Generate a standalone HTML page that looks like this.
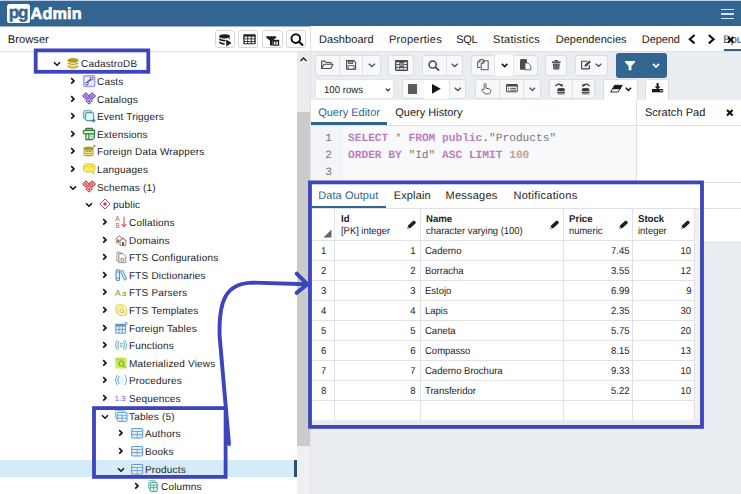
<!DOCTYPE html><html><head><meta charset="utf-8"><style>
html,body{margin:0;padding:0;}
body{width:741px;height:494px;overflow:hidden;position:relative;background:#fff;font-family:"Liberation Sans",sans-serif;}
.t{position:absolute;white-space:nowrap;line-height:1;text-rendering:geometricPrecision;}
.r{position:absolute;box-sizing:border-box;}
svg{position:absolute;overflow:visible;}
</style></head><body>
<div class="r" style="left:0.00px;top:0.00px;width:741.00px;height:1.20px;background:#b9d0e8"></div><div class="r" style="left:0.00px;top:1.00px;width:741.00px;height:24.50px;background:#326690"></div><div class="r" style="left:0.00px;top:25.50px;width:741.00px;height:0.80px;background:#9fb4c8"></div><div class="r" style="left:6.80px;top:4.00px;width:23.50px;height:19.20px;background:#fff;border-radius:2.5px"></div><div class="t" style="left:8.80px;top:4.20px;font-size:17px;color:#326690;font-weight:bold;font-family:'Liberation Sans', sans-serif;letter-spacing:-1.2px;-webkit-text-stroke:0.5px #326690">pg</div><div class="t" style="left:30.60px;top:6.20px;font-size:16.3px;color:#fff;font-weight:bold;font-family:'Liberation Sans', sans-serif;-webkit-text-stroke:0.6px #fff;letter-spacing:0.1px">Admin</div><div class="r" style="left:721.20px;top:8.85px;width:13.30px;height:1.30px;background:#d3e2f2"></div><div class="r" style="left:721.20px;top:13.35px;width:13.30px;height:1.30px;background:#d3e2f2"></div><div class="r" style="left:721.20px;top:17.65px;width:13.30px;height:1.30px;background:#d3e2f2"></div><div class="t" style="left:7.80px;top:35.20px;font-size:11.2px;color:#222;font-weight:normal;font-family:'Liberation Sans', sans-serif;">Browser</div><div class="r" style="left:214.70px;top:29.70px;width:20.20px;height:18.70px;border:1px solid #d3d6db;border-radius:3px;background:#fff"></div><div class="r" style="left:238.30px;top:29.70px;width:20.20px;height:18.70px;border:1px solid #d3d6db;border-radius:3px;background:#fff"></div><div class="r" style="left:262.40px;top:29.70px;width:20.20px;height:18.70px;border:1px solid #d3d6db;border-radius:3px;background:#fff"></div><div class="r" style="left:286.20px;top:29.70px;width:20.20px;height:18.70px;border:1px solid #d3d6db;border-radius:3px;background:#fff"></div><div class="r" style="left:0.00px;top:51.20px;width:310.00px;height:0.90px;background:#dde0e4"></div><div class="r" style="left:297.00px;top:52.00px;width:13.00px;height:60.00px;background:#ececec"></div><div class="r" style="left:297.00px;top:112.00px;width:13.00px;height:333.50px;background:#cbcbcb"></div><div class="r" style="left:297.00px;top:445.50px;width:13.00px;height:48.50px;background:#efefef"></div><svg style="left:299px;top:55px" width="9" height="8"><path d="M1.5 6 L4.5 3 L7.5 6" stroke="#222" stroke-width="1.4" fill="none"/></svg><div class="r" style="left:0.00px;top:459.80px;width:294.30px;height:17.20px;background:#d6ebf8"></div><div class="r" style="left:294.30px;top:459.80px;width:2.70px;height:17.20px;background:#2c4f72"></div><svg style="left:53.00px;top:60.50px" width="8" height="6"><path d="M1 1.2 L4 4.2 L7 1.2" stroke="#111" stroke-width="1.5" fill="none"/></svg><svg style="left:66.70px;top:56.70px" width="12.5" height="12" viewBox="0 0 12.5 12"><path d="M0.6 3.5 L0.6 9.6 Q0.6 11.6 6 11.6 Q11.4 11.6 11.4 9.6 L11.4 3.5 Z" fill="#f3eba9"/><path d="M0.6 6.4 Q6 8.6 11.4 6.4 M0.6 9.3 Q6 11.5 11.4 9.3" stroke="#a48e2a" stroke-width="0.9" fill="none"/><path d="M0.6 9.6 Q0.6 11.6 6 11.6 Q11.4 11.6 11.4 9.6" stroke="#cdb857" stroke-width="0.6" fill="none"/><ellipse cx="6" cy="3.4" rx="5.5" ry="2.4" fill="#b19a2f"/></svg><div class="t" style="left:81.00px;top:60.20px;font-size:10.0px;color:#222;font-weight:normal;font-family:'Liberation Sans', sans-serif;letter-spacing:0.18px">CadastroDB</div><svg style="left:70.00px;top:76.90px" width="6" height="8"><path d="M1.2 1.2 L4 3.9 L1.2 6.6" stroke="#111" stroke-width="1.6" fill="none"/></svg><svg style="left:82.70px;top:74.70px" width="12.5" height="12" viewBox="0 0 12.5 12"><rect x="0.8" y="0.8" width="10.9" height="10.6" rx="1.2" fill="#ecebfa" stroke="#a49fe0" stroke-width="1.5"/><path d="M3.6 9.2 C4.5 6.8 4.2 6.6 6 5.8 C7.6 5 7.8 4.6 8.8 3.2" stroke="#4b40ae" stroke-width="1.4" fill="none"/><circle cx="4" cy="8.6" r="1.35" fill="#fff" stroke="#4b40ae" stroke-width="0.9"/><circle cx="8.7" cy="3.6" r="1.35" fill="#fff" stroke="#4b40ae" stroke-width="0.9"/></svg><div class="t" style="left:97.00px;top:78.20px;font-size:10.0px;color:#222;font-weight:normal;font-family:'Liberation Sans', sans-serif;letter-spacing:0.18px">Casts</div><svg style="left:70.00px;top:94.90px" width="6" height="8"><path d="M1.2 1.2 L4 3.9 L1.2 6.6" stroke="#111" stroke-width="1.6" fill="none"/></svg><svg style="left:82.70px;top:92.70px" width="12.5" height="12" viewBox="0 0 12.5 12"><g fill="#ece2fa" stroke="#7b52c1" stroke-width="1.15" stroke-linejoin="round"><path d="M3 0 L6.1 3 L3 6 L-0.1 3Z"/><path d="M9.2 0 L12.3 3 L9.2 6 L6.1 3Z"/><path d="M6.1 4.9 L9.2 7.9 L6.1 10.9 L3 7.9Z"/></g><g fill="#5e36a8"><circle cx="3" cy="3" r="1"/><circle cx="9.2" cy="3" r="1"/><circle cx="6.1" cy="7.9" r="1"/></g></svg><div class="t" style="left:97.00px;top:96.20px;font-size:10.0px;color:#222;font-weight:normal;font-family:'Liberation Sans', sans-serif;letter-spacing:0.18px">Catalogs</div><svg style="left:70.00px;top:111.90px" width="6" height="8"><path d="M1.2 1.2 L4 3.9 L1.2 6.6" stroke="#111" stroke-width="1.6" fill="none"/></svg><svg style="left:82.70px;top:109.70px" width="12.5" height="12" viewBox="0 0 12.5 12"><rect x="0.7" y="0.7" width="8" height="8" rx="1.5" fill="#e6f6f7" stroke="#4aa3a8" stroke-width="1.1"/><rect x="2.6" y="2.6" width="8" height="8" rx="1.5" fill="#e3f6f8" stroke="#4aa3a8" stroke-width="1.1"/><path d="M7.5 10.6 L11.5 10.6 M10 9 L11.8 10.6 L10 12.2" stroke="#2f8a93" stroke-width="1.2" fill="none"/></svg><div class="t" style="left:97.00px;top:113.20px;font-size:10.0px;color:#222;font-weight:normal;font-family:'Liberation Sans', sans-serif;letter-spacing:0.18px">Event Triggers</div><svg style="left:70.00px;top:129.90px" width="6" height="8"><path d="M1.2 1.2 L4 3.9 L1.2 6.6" stroke="#111" stroke-width="1.6" fill="none"/></svg><svg style="left:82.70px;top:127.70px" width="12.5" height="12" viewBox="0 0 12.5 12"><g stroke="#2f7d3b" stroke-width="1.1" fill="#c8efc8" stroke-linejoin="round"><path d="M3 0.4 L9.4 0.4 L10.2 2.4 L2.4 2.4 Z"/><path d="M1.6 2.4 L11.6 2.4 L11.6 6 L1.6 6 Q0.2 6 0.2 4.2 Q0.2 2.4 1.6 2.4 Z"/><path d="M2.8 6 L11.4 6 L11.4 9.6 L9.2 11.6 L2.8 11.6 Z"/></g><path d="M5.8 6 L5.8 11.6 M8.8 8.4 L9.6 8.4" stroke="#2f7d3b" stroke-width="1"/><path d="M3.5 4.2 L8 4.2" stroke="#eaffea" stroke-width="0.8"/></svg><div class="t" style="left:97.00px;top:131.20px;font-size:10.0px;color:#222;font-weight:normal;font-family:'Liberation Sans', sans-serif;letter-spacing:0.18px">Extensions</div><svg style="left:70.00px;top:146.90px" width="6" height="8"><path d="M1.2 1.2 L4 3.9 L1.2 6.6" stroke="#111" stroke-width="1.6" fill="none"/></svg><svg style="left:82.70px;top:144.70px" width="12.5" height="12" viewBox="0 0 12.5 12"><path d="M0.4 3.6 L0.4 10.2 Q0.4 11.8 5.6 11.8 Q10.8 11.8 10.8 10.2 L10.8 3.6 Z" fill="#f3eba9"/><path d="M0.4 5.8 Q5.6 7.6 10.8 5.8 M0.4 7.9 Q5.6 9.7 10.8 7.9 M0.4 10 Q5.6 11.8 10.8 10" stroke="#a48e2a" stroke-width="0.9" fill="none"/><ellipse cx="5.6" cy="3.6" rx="5.2" ry="2" fill="#b19a2f"/><path d="M9.6 0 L12.4 0 L12.4 2.6 Z" fill="#a8922c"/><path d="M9.2 3 L11.4 1" stroke="#a8922c" stroke-width="0.8"/></svg><div class="t" style="left:97.00px;top:148.20px;font-size:10.0px;color:#222;font-weight:normal;font-family:'Liberation Sans', sans-serif;letter-spacing:0.18px">Foreign Data Wrappers</div><svg style="left:70.00px;top:164.90px" width="6" height="8"><path d="M1.2 1.2 L4 3.9 L1.2 6.6" stroke="#111" stroke-width="1.6" fill="none"/></svg><svg style="left:82.70px;top:162.70px" width="12.5" height="12" viewBox="0 0 12.5 12"><path d="M2.4 1 L10.2 1 L12 2.8 L12 6.8 L10.4 8.6 L10.6 11 L8.2 9 L2.4 9 L0.5 7 L0.5 2.8 Z" fill="#f6ef5a" stroke="#cfbf3a" stroke-width="0.9" stroke-linejoin="round"/><path d="M1.8 3.6 L10.8 3.6" stroke="#d9ca40" stroke-width="0.9"/></svg><div class="t" style="left:97.00px;top:166.20px;font-size:10.0px;color:#222;font-weight:normal;font-family:'Liberation Sans', sans-serif;letter-spacing:0.18px">Languages</div><svg style="left:69.00px;top:184.50px" width="8" height="6"><path d="M1 1.2 L4 4.2 L7 1.2" stroke="#111" stroke-width="1.5" fill="none"/></svg><svg style="left:82.70px;top:180.70px" width="12.5" height="12" viewBox="0 0 12.5 12"><g fill="#fbe6e7" stroke="#cf4f57" stroke-width="1.15" stroke-linejoin="round"><path d="M3 0 L6.1 3 L3 6 L-0.1 3Z"/><path d="M9.2 0 L12.3 3 L9.2 6 L6.1 3Z"/><path d="M6.1 4.9 L9.2 7.9 L6.1 10.9 L3 7.9Z"/></g><g fill="#b8363e"><circle cx="3" cy="3" r="1"/><circle cx="9.2" cy="3" r="1"/><circle cx="6.1" cy="7.9" r="1"/></g></svg><div class="t" style="left:97.00px;top:184.20px;font-size:10.0px;color:#222;font-weight:normal;font-family:'Liberation Sans', sans-serif;letter-spacing:0.18px">Schemas (1)</div><svg style="left:85.00px;top:201.50px" width="8" height="6"><path d="M1 1.2 L4 4.2 L7 1.2" stroke="#111" stroke-width="1.5" fill="none"/></svg><svg style="left:98.70px;top:197.70px" width="12.5" height="12" viewBox="0 0 12.5 12"><path d="M6 0.9 L11.1 6 L6 11.1 L0.9 6 Z" fill="#fff" stroke="#b0474d" stroke-width="1"/><path d="M6 3.9 L8.1 6 L6 8.1 L3.9 6Z" fill="#c23c47"/></svg><div class="t" style="left:113.00px;top:201.20px;font-size:10.0px;color:#222;font-weight:normal;font-family:'Liberation Sans', sans-serif;letter-spacing:0.18px">public</div><svg style="left:102.00px;top:217.90px" width="6" height="8"><path d="M1.2 1.2 L4 3.9 L1.2 6.6" stroke="#111" stroke-width="1.6" fill="none"/></svg><svg style="left:114.70px;top:215.70px" width="12.5" height="12" viewBox="0 0 12.5 12"><text x="0.2" y="5.4" font-size="6.6" font-family="Liberation Sans" fill="#d9545a">A</text><text x="0.4" y="11.6" font-size="6.6" font-family="Liberation Sans" fill="#d9545a">B</text><path d="M9 0.8 L9 10.5 M6.8 8.2 L9 10.6 L11.2 8.2" stroke="#d9545a" stroke-width="1.1" fill="none"/></svg><div class="t" style="left:129.00px;top:219.20px;font-size:10.0px;color:#222;font-weight:normal;font-family:'Liberation Sans', sans-serif;letter-spacing:0.18px">Collations</div><svg style="left:102.00px;top:235.90px" width="6" height="8"><path d="M1.2 1.2 L4 3.9 L1.2 6.6" stroke="#111" stroke-width="1.6" fill="none"/></svg><svg style="left:114.70px;top:233.70px" width="12.5" height="12" viewBox="0 0 12.5 12"><path d="M0.6 5.2 L4.2 1.6 L7.6 5" stroke="#b46a5e" stroke-width="1" fill="none"/><path d="M1.4 4.6 L1.4 9 L4 9" stroke="#8a8a8a" stroke-width="0.9" fill="none"/><rect x="2.4" y="5.6" width="1.6" height="2.6" fill="#7a5230"/><path d="M4.2 7.6 L7.8 4 L11.6 7.6" stroke="#b46a5e" stroke-width="1.1" fill="none"/><path d="M5 7.2 L5 11.4 L10.8 11.4 L10.8 7.2" stroke="#8a8a8a" stroke-width="1" fill="#fff"/><rect x="6.9" y="8.2" width="2.2" height="3.2" fill="#7a5230"/></svg><div class="t" style="left:129.00px;top:237.20px;font-size:10.0px;color:#222;font-weight:normal;font-family:'Liberation Sans', sans-serif;letter-spacing:0.18px">Domains</div><svg style="left:102.00px;top:252.90px" width="6" height="8"><path d="M1.2 1.2 L4 3.9 L1.2 6.6" stroke="#111" stroke-width="1.6" fill="none"/></svg><svg style="left:114.70px;top:250.70px" width="12.5" height="12" viewBox="0 0 12.5 12"><path d="M1.8 1 L5.5 1 L7.5 3 L7.5 10 L1.8 10 Z" fill="#f4f4f4" stroke="#9a9a9a" stroke-width="0.9"/><path d="M3.8 2.6 L8 2.6 L10.8 5.4 L10.8 11.6 L3.8 11.6 Z" fill="#fafafa" stroke="#8a8a8a" stroke-width="1"/><circle cx="7.3" cy="8.6" r="1.5" fill="none" stroke="#7a7a7a" stroke-width="1"/></svg><div class="t" style="left:129.00px;top:254.20px;font-size:10.0px;color:#222;font-weight:normal;font-family:'Liberation Sans', sans-serif;letter-spacing:0.18px">FTS Configurations</div><svg style="left:102.00px;top:270.90px" width="6" height="8"><path d="M1.2 1.2 L4 3.9 L1.2 6.6" stroke="#111" stroke-width="1.6" fill="none"/></svg><svg style="left:114.70px;top:268.70px" width="12.5" height="12" viewBox="0 0 12.5 12"><rect x="1" y="0.8" width="3.6" height="10.6" rx="0.6" fill="#e3eef8" stroke="#4d84b8" stroke-width="1"/><path d="M1 3 L4.6 3 M1 9.2 L4.6 9.2" stroke="#4d84b8" stroke-width="0.8"/><path d="M5.4 2.2 L7.6 1.2 L11.6 10.2 L9.4 11.2 Z" fill="#d8ecf8" stroke="#4d9ac8" stroke-width="1" stroke-linejoin="round"/></svg><div class="t" style="left:129.00px;top:272.20px;font-size:10.0px;color:#222;font-weight:normal;font-family:'Liberation Sans', sans-serif;letter-spacing:0.18px">FTS Dictionaries</div><svg style="left:102.00px;top:287.90px" width="6" height="8"><path d="M1.2 1.2 L4 3.9 L1.2 6.6" stroke="#111" stroke-width="1.6" fill="none"/></svg><svg style="left:114.70px;top:285.70px" width="12.5" height="12" viewBox="0 0 12.5 12"><text x="0" y="9.6" font-size="8.6" font-family="Liberation Sans" fill="#5f9e2a" style="text-rendering:geometricPrecision">A</text><text x="7" y="9.6" font-size="8" font-family="Liberation Sans" fill="#5f9e2a" style="text-rendering:geometricPrecision">a</text></svg><div class="t" style="left:129.00px;top:289.20px;font-size:10.0px;color:#222;font-weight:normal;font-family:'Liberation Sans', sans-serif;letter-spacing:0.18px">FTS Parsers</div><svg style="left:102.00px;top:305.90px" width="6" height="8"><path d="M1.2 1.2 L4 3.9 L1.2 6.6" stroke="#111" stroke-width="1.6" fill="none"/></svg><svg style="left:114.70px;top:303.70px" width="12.5" height="12" viewBox="0 0 12.5 12"><rect x="0.7" y="0.7" width="8.5" height="8.5" rx="2" fill="#faf6c0" stroke="#e3d657" stroke-width="1"/><rect x="2.8" y="2.8" width="8.7" height="8.7" rx="2" fill="#fbf7c4" stroke="#e3d657" stroke-width="1"/><circle cx="6.8" cy="6.8" r="1.8" fill="none" stroke="#c8b84a" stroke-width="0.9"/><path d="M8.1 8.1 L9.5 9.5" stroke="#c8b84a" stroke-width="0.9"/></svg><div class="t" style="left:129.00px;top:307.20px;font-size:10.0px;color:#222;font-weight:normal;font-family:'Liberation Sans', sans-serif;letter-spacing:0.18px">FTS Templates</div><svg style="left:102.00px;top:323.90px" width="6" height="8"><path d="M1.2 1.2 L4 3.9 L1.2 6.6" stroke="#111" stroke-width="1.6" fill="none"/></svg><svg style="left:114.70px;top:321.70px" width="12.5" height="12" viewBox="0 0 12.5 12"><rect x="0.8" y="2.2" width="9.6" height="9" fill="#e8f2fb" stroke="#5b93c9" stroke-width="0.9"/><rect x="0.8" y="2.2" width="9.6" height="2.4" fill="#5b93c9"/><path d="M0.8 7.4 L10.4 7.4 M4 4.6 L4 11.2 M7.2 4.6 L7.2 11.2" stroke="#5b93c9" stroke-width="0.8"/><path d="M9.4 0.6 L12 0.6 L12 3.2" stroke="#5b93c9" stroke-width="0.9" fill="none"/></svg><div class="t" style="left:129.00px;top:325.20px;font-size:10.0px;color:#222;font-weight:normal;font-family:'Liberation Sans', sans-serif;letter-spacing:0.18px">Foreign Tables</div><svg style="left:102.00px;top:340.90px" width="6" height="8"><path d="M1.2 1.2 L4 3.9 L1.2 6.6" stroke="#111" stroke-width="1.6" fill="none"/></svg><svg style="left:114.70px;top:338.70px" width="12.5" height="12" viewBox="0 0 12.5 12"><path d="M2.6 0.8 C0.2 3.2 0.2 8.8 2.6 11.2 M4 2.2 C2.6 4 2.6 8 4 9.8 M9.6 0.8 C12 3.2 12 8.8 9.6 11.2 M8.2 2.2 C9.6 4 9.6 8 8.2 9.8" stroke="#4f9eaa" stroke-width="0.9" fill="none"/><path d="M4.8 4.4 L7.4 4.4 M4.8 6 L7.4 6 M4.8 7.6 L7.4 7.6" stroke="#4f9eaa" stroke-width="0.8"/></svg><div class="t" style="left:129.00px;top:342.20px;font-size:10.0px;color:#222;font-weight:normal;font-family:'Liberation Sans', sans-serif;letter-spacing:0.18px">Functions</div><svg style="left:102.00px;top:358.90px" width="6" height="8"><path d="M1.2 1.2 L4 3.9 L1.2 6.6" stroke="#111" stroke-width="1.6" fill="none"/></svg><svg style="left:114.70px;top:356.70px" width="12.5" height="12" viewBox="0 0 12.5 12"><rect x="0.4" y="0.8" width="11.2" height="10.6" rx="1" fill="#c9ea5c"/><rect x="0.4" y="0.8" width="8" height="3" fill="#b9de44"/><circle cx="6.4" cy="6.6" r="2.4" fill="none" stroke="#7fae22" stroke-width="1.1"/><path d="M8 8.4 L10.4 10.6" stroke="#7fae22" stroke-width="1.1"/></svg><div class="t" style="left:129.00px;top:360.20px;font-size:10.0px;color:#222;font-weight:normal;font-family:'Liberation Sans', sans-serif;letter-spacing:0.18px">Materialized Views</div><svg style="left:102.00px;top:375.90px" width="6" height="8"><path d="M1.2 1.2 L4 3.9 L1.2 6.6" stroke="#111" stroke-width="1.6" fill="none"/></svg><svg style="left:114.70px;top:373.70px" width="12.5" height="12" viewBox="0 0 12.5 12"><path d="M5 1.6 C2.4 3.6 2.4 8.4 5 10.4 L7.2 10.4 C9.8 8.4 9.8 3.6 7.2 1.6 Z" fill="#e6f7fa"/><path d="M2.6 0.8 C0.2 3.2 0.2 8.8 2.6 11.2 M4.2 2 C2.4 4 2.4 8 4.2 10 M9.6 0.8 C12 3.2 12 8.8 9.6 11.2" stroke="#4f9eaa" stroke-width="0.9" fill="none"/></svg><div class="t" style="left:129.00px;top:377.20px;font-size:10.0px;color:#222;font-weight:normal;font-family:'Liberation Sans', sans-serif;letter-spacing:0.18px">Procedures</div><svg style="left:102.00px;top:393.90px" width="6" height="8"><path d="M1.2 1.2 L4 3.9 L1.2 6.6" stroke="#111" stroke-width="1.6" fill="none"/></svg><svg style="left:114.70px;top:391.70px" width="12.5" height="12" viewBox="0 0 12.5 12"><text x="-0.2" y="9.2" font-size="7.6" font-family="Liberation Sans" fill="#7658c2" style="text-rendering:geometricPrecision">1.3</text></svg><div class="t" style="left:129.00px;top:395.20px;font-size:10.0px;color:#222;font-weight:normal;font-family:'Liberation Sans', sans-serif;letter-spacing:0.18px">Sequences</div><svg style="left:101.00px;top:413.50px" width="8" height="6"><path d="M1 1.2 L4 4.2 L7 1.2" stroke="#111" stroke-width="1.5" fill="none"/></svg><svg style="left:114.70px;top:409.70px" width="12.5" height="12" viewBox="0 0 12.5 12"><rect x="0.4" y="0.4" width="9" height="8" rx="1" fill="#eaf3fc" stroke="#7fb3e0" stroke-width="0.9"/><rect x="2.2" y="2.4" width="9.8" height="9" rx="1.1" fill="#eaf3fc" stroke="#5b9bd5" stroke-width="1"/><path d="M2.2 5.2 L12 5.2 M2.2 8.2 L12 8.2 M7.1 5.2 L7.1 11.4" stroke="#5b9bd5" stroke-width="0.85"/></svg><div class="t" style="left:129.00px;top:413.20px;font-size:10.0px;color:#222;font-weight:normal;font-family:'Liberation Sans', sans-serif;letter-spacing:0.18px">Tables (5)</div><svg style="left:118.00px;top:428.90px" width="6" height="8"><path d="M1.2 1.2 L4 3.9 L1.2 6.6" stroke="#111" stroke-width="1.6" fill="none"/></svg><svg style="left:130.70px;top:426.70px" width="12.5" height="12" viewBox="0 0 12.5 12"><rect x="0.7" y="1.4" width="11" height="9.6" rx="1.2" fill="#eaf3fc" stroke="#5b9bd5" stroke-width="1.05"/><path d="M0.7 4.4 L11.7 4.4 M0.7 7.6 L11.7 7.6 M6.2 4.4 L6.2 11" stroke="#5b9bd5" stroke-width="0.9"/><path d="M1.6 5.9 L11 5.9 M1.6 9.2 L11 9.2" stroke="#f4d9b0" stroke-width="0.5"/></svg><div class="t" style="left:145.00px;top:430.20px;font-size:10.0px;color:#222;font-weight:normal;font-family:'Liberation Sans', sans-serif;letter-spacing:0.18px">Authors</div><svg style="left:118.00px;top:446.90px" width="6" height="8"><path d="M1.2 1.2 L4 3.9 L1.2 6.6" stroke="#111" stroke-width="1.6" fill="none"/></svg><svg style="left:130.70px;top:444.70px" width="12.5" height="12" viewBox="0 0 12.5 12"><rect x="0.7" y="1.4" width="11" height="9.6" rx="1.2" fill="#eaf3fc" stroke="#5b9bd5" stroke-width="1.05"/><path d="M0.7 4.4 L11.7 4.4 M0.7 7.6 L11.7 7.6 M6.2 4.4 L6.2 11" stroke="#5b9bd5" stroke-width="0.9"/><path d="M1.6 5.9 L11 5.9 M1.6 9.2 L11 9.2" stroke="#f4d9b0" stroke-width="0.5"/></svg><div class="t" style="left:145.00px;top:448.20px;font-size:10.0px;color:#222;font-weight:normal;font-family:'Liberation Sans', sans-serif;letter-spacing:0.18px">Books</div><svg style="left:117.00px;top:466.50px" width="8" height="6"><path d="M1 1.2 L4 4.2 L7 1.2" stroke="#111" stroke-width="1.5" fill="none"/></svg><svg style="left:130.70px;top:462.70px" width="12.5" height="12" viewBox="0 0 12.5 12"><rect x="0.7" y="1.4" width="11" height="9.6" rx="1.2" fill="#eaf3fc" stroke="#5b9bd5" stroke-width="1.05"/><path d="M0.7 4.4 L11.7 4.4 M0.7 7.6 L11.7 7.6 M6.2 4.4 L6.2 11" stroke="#5b9bd5" stroke-width="0.9"/><path d="M1.6 5.9 L11 5.9 M1.6 9.2 L11 9.2" stroke="#f4d9b0" stroke-width="0.5"/></svg><div class="t" style="left:145.00px;top:466.20px;font-size:10.0px;color:#222;font-weight:normal;font-family:'Liberation Sans', sans-serif;letter-spacing:0.18px">Products</div><svg style="left:134.00px;top:481.90px" width="6" height="8"><path d="M1.2 1.2 L4 3.9 L1.2 6.6" stroke="#111" stroke-width="1.6" fill="none"/></svg><svg style="left:146.70px;top:479.70px" width="12.5" height="12" viewBox="0 0 12.5 12"><rect x="1.6" y="0.6" width="7" height="9" rx="1" fill="#e3f5ef" stroke="#63b9a6" stroke-width="0.8"/><rect x="3.2" y="2.4" width="7" height="9.2" rx="1" fill="#e3f5ef" stroke="#3fa58e" stroke-width="1"/><path d="M3.2 5 L10.2 5 M3.2 7.6 L10.2 7.6 M6.7 5 L6.7 11.6" stroke="#3fa58e" stroke-width="0.8"/></svg><div class="t" style="left:161.00px;top:483.20px;font-size:10.0px;color:#222;font-weight:normal;font-family:'Liberation Sans', sans-serif;letter-spacing:0.18px">Columns</div><div class="r" style="left:310.00px;top:26.00px;width:431.00px;height:468.00px;background:#e9ecf0"></div><div class="r" style="left:309.60px;top:26.00px;width:1.40px;height:468.00px;background:#dfe2e7"></div><div class="r" style="left:311.00px;top:26.00px;width:430.00px;height:25.00px;background:#fff"></div><div class="r" style="left:311.00px;top:50.60px;width:430.00px;height:0.90px;background:#dde0e6"></div><div class="t" style="left:318.90px;top:35.20px;font-size:11px;color:#222;font-weight:normal;font-family:'Liberation Sans', sans-serif;letter-spacing:0.1px">Dashboard</div><div class="t" style="left:388.90px;top:35.20px;font-size:11px;color:#222;font-weight:normal;font-family:'Liberation Sans', sans-serif;letter-spacing:0.3px">Properties</div><div class="t" style="left:456.30px;top:35.20px;font-size:11px;color:#222;font-weight:normal;font-family:'Liberation Sans', sans-serif;letter-spacing:-0.3px">SQL</div><div class="t" style="left:493.00px;top:35.20px;font-size:11px;color:#222;font-weight:normal;font-family:'Liberation Sans', sans-serif;letter-spacing:0.3px">Statistics</div><div class="t" style="left:555.70px;top:35.20px;font-size:11px;color:#222;font-weight:normal;font-family:'Liberation Sans', sans-serif;letter-spacing:0.05px">Dependencies</div><div class="t" style="left:641.80px;top:35.20px;font-size:11px;color:#222;font-weight:normal;font-family:'Liberation Sans', sans-serif;letter-spacing:-0.1px">Depend</div><div class="r" style="left:314.50px;top:54.50px;width:66.80px;height:21.90px;background:#f7f8fa;border:1px solid #dadde2;border-radius:3px"></div><div class="r" style="left:339.10px;top:55.30px;width:0.90px;height:20.30px;background:#dfe2e7"></div><div class="r" style="left:362.10px;top:55.30px;width:0.90px;height:20.30px;background:#dfe2e7"></div><div class="r" style="left:387.70px;top:54.50px;width:26.30px;height:21.90px;background:#f7f8fa;border:1px solid #dadde2;border-radius:3px"></div><div class="r" style="left:421.50px;top:54.50px;width:41.50px;height:21.90px;background:#f7f8fa;border:1px solid #dadde2;border-radius:3px"></div><div class="r" style="left:445.50px;top:55.30px;width:0.90px;height:20.30px;background:#dfe2e7"></div><div class="r" style="left:470.70px;top:54.50px;width:67.30px;height:21.90px;background:#f7f8fa;border:1px solid #dadde2;border-radius:3px"></div><div class="r" style="left:494.10px;top:55.30px;width:0.90px;height:20.30px;background:#dfe2e7"></div><div class="r" style="left:512.90px;top:55.30px;width:0.90px;height:20.30px;background:#dfe2e7"></div><div class="r" style="left:494.90px;top:54.90px;width:18.00px;height:20.80px;background:#fff"></div><div class="r" style="left:544.60px;top:54.50px;width:22.70px;height:21.90px;background:#f7f8fa;border:1px solid #dadde2;border-radius:3px"></div><div class="r" style="left:574.70px;top:54.50px;width:33.70px;height:21.90px;background:#f7f8fa;border:1px solid #dadde2;border-radius:3px"></div><div class="r" style="left:615.70px;top:53.10px;width:51.40px;height:24.50px;background:#326690;border-radius:3px"></div><div class="r" style="left:314.50px;top:78.90px;width:79.30px;height:20.30px;background:#fff;border:1px solid #e3e6ea;border-radius:3px"></div><div class="t" style="left:324.20px;top:86.20px;font-size:10px;color:#222;font-weight:normal;font-family:'Liberation Sans', sans-serif;transform:scaleX(0.96);transform-origin:0 0;">100 rows</div><div class="r" style="left:401.80px;top:78.90px;width:64.20px;height:20.30px;background:#f7f8fa;border:1px solid #dadde2;border-radius:3px"></div><div class="r" style="left:423.60px;top:79.70px;width:0.90px;height:18.70px;background:#dfe2e7"></div><div class="r" style="left:448.90px;top:79.70px;width:0.90px;height:18.70px;background:#dfe2e7"></div><div class="r" style="left:474.70px;top:78.90px;width:66.30px;height:20.30px;background:#f7f8fa;border:1px solid #dadde2;border-radius:3px"></div><div class="r" style="left:498.50px;top:79.70px;width:0.90px;height:18.70px;background:#dfe2e7"></div><div class="r" style="left:523.30px;top:79.70px;width:0.90px;height:18.70px;background:#dfe2e7"></div><div class="r" style="left:548.60px;top:78.90px;width:46.40px;height:20.30px;background:#f7f8fa;border:1px solid #dadde2;border-radius:3px"></div><div class="r" style="left:571.50px;top:79.70px;width:0.90px;height:18.70px;background:#dfe2e7"></div><div class="r" style="left:603.20px;top:78.60px;width:34.70px;height:22.00px;background:#fff;border:1px solid #dadde2;border-bottom:none;border-radius:3px 3px 0 0"></div><div class="r" style="left:645.40px;top:78.60px;width:23.70px;height:22.00px;background:#fff;border:1px solid #dadde2;border-bottom:none;border-radius:3px 3px 0 0"></div><div class="r" style="left:310.80px;top:100.20px;width:326.10px;height:82.00px;background:#fff"></div><div class="r" style="left:636.00px;top:100.20px;width:105.00px;height:82.00px;background:#fff"></div><div class="r" style="left:635.80px;top:100.20px;width:0.90px;height:82.00px;background:#dde0e6"></div><div class="r" style="left:310.80px;top:124.80px;width:430.20px;height:0.90px;background:#dde0e6"></div><div class="t" style="left:318.20px;top:108.20px;font-size:11px;color:#326690;font-weight:normal;font-family:'Liberation Sans', sans-serif;">Query Editor</div><div class="r" style="left:311.00px;top:122.00px;width:76.10px;height:2.70px;background:#326690"></div><div class="t" style="left:395.30px;top:108.20px;font-size:11px;color:#222;font-weight:normal;font-family:'Liberation Sans', sans-serif;">Query History</div><div class="t" style="left:644.90px;top:108.20px;font-size:11px;color:#222;font-weight:normal;font-family:'Liberation Sans', sans-serif;letter-spacing:0.06px">Scratch Pad</div><div class="r" style="left:310.80px;top:125.70px;width:325.00px;height:55.50px;background:#f8f9fb"></div><div class="r" style="left:310.80px;top:181.60px;width:430.20px;height:1.00px;background:#dcdfe4"></div><div class="r" style="left:310.80px;top:125.70px;width:32.50px;height:55.50px;background:#f3f4f7"></div><div class="t" style="left:325.30px;top:134.20px;font-size:11.2px;color:#777;font-weight:normal;font-family:'Liberation Mono', monospace;">1</div><div class="t" style="left:325.30px;top:151.20px;font-size:11.2px;color:#777;font-weight:normal;font-family:'Liberation Mono', monospace;">2</div><div class="t" style="left:325.30px;top:168.20px;font-size:11.2px;color:#777;font-weight:normal;font-family:'Liberation Mono', monospace;">3</div><div class="t" style="left:348.00px;top:134.20px;font-size:11.2px;color:#555;font-weight:normal;font-family:'Liberation Mono', monospace;white-space:pre"><span style="color:#c07cbf;font-weight:bold">SELECT</span><span style="color:#888;font-weight:normal"> * </span><span style="color:#c07cbf;font-weight:bold">FROM</span><span style="color:#555;font-weight:normal"> </span><span style="color:#c07cbf;font-weight:bold">public</span><span style="color:#555;font-weight:normal">.</span><span style="color:#777;font-weight:normal">"Products"</span></div><div class="t" style="left:348.00px;top:151.20px;font-size:11.2px;color:#555;font-weight:normal;font-family:'Liberation Mono', monospace;white-space:pre"><span style="color:#c07cbf;font-weight:bold">ORDER BY</span><span style="color:#555;font-weight:normal"> </span><span style="color:#777;font-weight:normal">"Id"</span><span style="color:#555;font-weight:normal"> </span><span style="color:#c07cbf;font-weight:bold">ASC</span><span style="color:#555;font-weight:normal"> </span><span style="color:#c07cbf;font-weight:bold">LIMIT</span><span style="color:#555;font-weight:normal"> </span><span style="color:#c5a48c;font-weight:bold">100</span></div><div class="r" style="left:310.80px;top:182.60px;width:430.20px;height:58.00px;background:#fff"></div><div class="t" style="left:318.20px;top:191.20px;font-size:11px;color:#326690;font-weight:normal;font-family:'Liberation Sans', sans-serif;letter-spacing:0.08px">Data Output</div><div class="r" style="left:312.00px;top:205.60px;width:74.40px;height:2.40px;background:#326690"></div><div class="t" style="left:393.80px;top:191.20px;font-size:11px;color:#222;font-weight:normal;font-family:'Liberation Sans', sans-serif;letter-spacing:0.12px">Explain</div><div class="t" style="left:445.60px;top:191.20px;font-size:11px;color:#222;font-weight:normal;font-family:'Liberation Sans', sans-serif;letter-spacing:0.22px">Messages</div><div class="t" style="left:513.40px;top:191.20px;font-size:11px;color:#222;font-weight:normal;font-family:'Liberation Sans', sans-serif;letter-spacing:0.33px">Notifications</div><div class="r" style="left:310.80px;top:208.20px;width:430.20px;height:0.90px;background:#dde0e6"></div><div class="r" style="left:312.00px;top:240.30px;width:382.30px;height:180.00px;background:#fff"></div><div class="r" style="left:694.30px;top:209.00px;width:4.30px;height:212.00px;background:#f1f2f5"></div><div class="r" style="left:334.15px;top:209.00px;width:0.90px;height:211.30px;background:#e0e2e6"></div><div class="r" style="left:420.05px;top:209.00px;width:0.90px;height:211.30px;background:#e0e2e6"></div><div class="r" style="left:563.15px;top:209.00px;width:0.90px;height:211.30px;background:#e0e2e6"></div><div class="r" style="left:631.85px;top:209.00px;width:0.90px;height:211.30px;background:#e0e2e6"></div><div class="r" style="left:693.85px;top:209.00px;width:0.90px;height:211.30px;background:#e0e2e6"></div><div class="r" style="left:312.00px;top:239.85px;width:382.30px;height:0.90px;background:#e0e2e6"></div><div class="r" style="left:312.00px;top:259.85px;width:382.30px;height:0.90px;background:#e0e2e6"></div><div class="r" style="left:312.00px;top:279.85px;width:382.30px;height:0.90px;background:#e0e2e6"></div><div class="r" style="left:312.00px;top:299.85px;width:382.30px;height:0.90px;background:#e0e2e6"></div><div class="r" style="left:312.00px;top:319.85px;width:382.30px;height:0.90px;background:#e0e2e6"></div><div class="r" style="left:312.00px;top:339.85px;width:382.30px;height:0.90px;background:#e0e2e6"></div><div class="r" style="left:312.00px;top:359.85px;width:382.30px;height:0.90px;background:#e0e2e6"></div><div class="r" style="left:312.00px;top:379.85px;width:382.30px;height:0.90px;background:#e0e2e6"></div><div class="r" style="left:312.00px;top:399.85px;width:382.30px;height:0.90px;background:#e0e2e6"></div><div class="r" style="left:312.00px;top:419.85px;width:382.30px;height:0.90px;background:#e0e2e6"></div><div class="r" style="left:312.00px;top:420.30px;width:386.00px;height:3.50px;background:#e9ecf1"></div><div class="t" style="left:340.60px;top:215.20px;font-size:10px;color:#222;font-weight:bold;font-family:'Liberation Sans', sans-serif;transform:scaleX(0.96);transform-origin:0 0;">Id</div><div class="t" style="left:340.60px;top:227.20px;font-size:10px;color:#222;font-weight:normal;font-family:'Liberation Sans', sans-serif;transform:scaleX(0.94);transform-origin:0 0;">[PK] integer</div><svg style="left:406.90px;top:220.2px" width="9.5" height="9" viewBox="0 0 9.5 9"><path d="M0.4 8.7 L1.0 5.6 L5.9 0.9 Q6.8 0 7.7 0.9 L8.5 1.7 Q9.3 2.6 8.4 3.4 L3.5 8.1 Z" fill="#1e1e1e"/><path d="M1.1 6.9 L2.2 8 L0.9 8.3 Z" fill="#eee"/></svg><div class="t" style="left:426.40px;top:215.20px;font-size:10px;color:#222;font-weight:bold;font-family:'Liberation Sans', sans-serif;transform:scaleX(0.96);transform-origin:0 0;">Name</div><div class="t" style="left:426.40px;top:227.20px;font-size:10px;color:#222;font-weight:normal;font-family:'Liberation Sans', sans-serif;transform:scaleX(0.94);transform-origin:0 0;">character varying (100)</div><svg style="left:550.20px;top:220.2px" width="9.5" height="9" viewBox="0 0 9.5 9"><path d="M0.4 8.7 L1.0 5.6 L5.9 0.9 Q6.8 0 7.7 0.9 L8.5 1.7 Q9.3 2.6 8.4 3.4 L3.5 8.1 Z" fill="#1e1e1e"/><path d="M1.1 6.9 L2.2 8 L0.9 8.3 Z" fill="#eee"/></svg><div class="t" style="left:569.00px;top:215.20px;font-size:10px;color:#222;font-weight:bold;font-family:'Liberation Sans', sans-serif;transform:scaleX(0.96);transform-origin:0 0;">Price</div><div class="t" style="left:569.00px;top:227.20px;font-size:10px;color:#222;font-weight:normal;font-family:'Liberation Sans', sans-serif;transform:scaleX(0.94);transform-origin:0 0;">numeric</div><svg style="left:619.10px;top:220.2px" width="9.5" height="9" viewBox="0 0 9.5 9"><path d="M0.4 8.7 L1.0 5.6 L5.9 0.9 Q6.8 0 7.7 0.9 L8.5 1.7 Q9.3 2.6 8.4 3.4 L3.5 8.1 Z" fill="#1e1e1e"/><path d="M1.1 6.9 L2.2 8 L0.9 8.3 Z" fill="#eee"/></svg><div class="t" style="left:637.90px;top:215.20px;font-size:10px;color:#222;font-weight:bold;font-family:'Liberation Sans', sans-serif;transform:scaleX(0.96);transform-origin:0 0;">Stock</div><div class="t" style="left:637.90px;top:227.20px;font-size:10px;color:#222;font-weight:normal;font-family:'Liberation Sans', sans-serif;transform:scaleX(0.94);transform-origin:0 0;">integer</div><svg style="left:681.40px;top:220.2px" width="9.5" height="9" viewBox="0 0 9.5 9"><path d="M0.4 8.7 L1.0 5.6 L5.9 0.9 Q6.8 0 7.7 0.9 L8.5 1.7 Q9.3 2.6 8.4 3.4 L3.5 8.1 Z" fill="#1e1e1e"/><path d="M1.1 6.9 L2.2 8 L0.9 8.3 Z" fill="#eee"/></svg><svg style="left:323px;top:228.5px" width="9" height="9" viewBox="0 0 9 9"><path d="M8.5 0.5 L8.5 8.5 L0.5 8.5 Z" fill="#666"/></svg><div class="t" style="left:321.20px;top:247.20px;font-size:10.0px;color:#222;font-weight:normal;font-family:'Liberation Sans', sans-serif;transform:scaleX(0.95);transform-origin:0 0;">1</div><div class="t" style="right:325.20px;top:247.20px;font-size:10.0px;color:#222;font-weight:normal;transform:scaleX(0.95);transform-origin:100% 0;">1</div><div class="t" style="left:425.30px;top:247.20px;font-size:10.0px;color:#222;font-weight:normal;font-family:'Liberation Sans', sans-serif;transform:scaleX(0.95);transform-origin:0 0;">Caderno</div><div class="t" style="right:111.70px;top:247.20px;font-size:10.0px;color:#222;font-weight:normal;transform:scaleX(0.95);transform-origin:100% 0;">7.45</div><div class="t" style="right:49.80px;top:247.20px;font-size:10.0px;color:#222;font-weight:normal;transform:scaleX(0.95);transform-origin:100% 0;">10</div><div class="t" style="left:321.20px;top:267.20px;font-size:10.0px;color:#222;font-weight:normal;font-family:'Liberation Sans', sans-serif;transform:scaleX(0.95);transform-origin:0 0;">2</div><div class="t" style="right:325.20px;top:267.20px;font-size:10.0px;color:#222;font-weight:normal;transform:scaleX(0.95);transform-origin:100% 0;">2</div><div class="t" style="left:425.30px;top:267.20px;font-size:10.0px;color:#222;font-weight:normal;font-family:'Liberation Sans', sans-serif;transform:scaleX(0.95);transform-origin:0 0;">Borracha</div><div class="t" style="right:111.70px;top:267.20px;font-size:10.0px;color:#222;font-weight:normal;transform:scaleX(0.95);transform-origin:100% 0;">3.55</div><div class="t" style="right:49.80px;top:267.20px;font-size:10.0px;color:#222;font-weight:normal;transform:scaleX(0.95);transform-origin:100% 0;">12</div><div class="t" style="left:321.20px;top:287.20px;font-size:10.0px;color:#222;font-weight:normal;font-family:'Liberation Sans', sans-serif;transform:scaleX(0.95);transform-origin:0 0;">3</div><div class="t" style="right:325.20px;top:287.20px;font-size:10.0px;color:#222;font-weight:normal;transform:scaleX(0.95);transform-origin:100% 0;">3</div><div class="t" style="left:425.30px;top:287.20px;font-size:10.0px;color:#222;font-weight:normal;font-family:'Liberation Sans', sans-serif;transform:scaleX(0.95);transform-origin:0 0;">Estojo</div><div class="t" style="right:111.70px;top:287.20px;font-size:10.0px;color:#222;font-weight:normal;transform:scaleX(0.95);transform-origin:100% 0;">6.99</div><div class="t" style="right:49.80px;top:287.20px;font-size:10.0px;color:#222;font-weight:normal;transform:scaleX(0.95);transform-origin:100% 0;">9</div><div class="t" style="left:321.20px;top:307.20px;font-size:10.0px;color:#222;font-weight:normal;font-family:'Liberation Sans', sans-serif;transform:scaleX(0.95);transform-origin:0 0;">4</div><div class="t" style="right:325.20px;top:307.20px;font-size:10.0px;color:#222;font-weight:normal;transform:scaleX(0.95);transform-origin:100% 0;">4</div><div class="t" style="left:425.30px;top:307.20px;font-size:10.0px;color:#222;font-weight:normal;font-family:'Liberation Sans', sans-serif;transform:scaleX(0.95);transform-origin:0 0;">Lapis</div><div class="t" style="right:111.70px;top:307.20px;font-size:10.0px;color:#222;font-weight:normal;transform:scaleX(0.95);transform-origin:100% 0;">2.35</div><div class="t" style="right:49.80px;top:307.20px;font-size:10.0px;color:#222;font-weight:normal;transform:scaleX(0.95);transform-origin:100% 0;">30</div><div class="t" style="left:321.20px;top:327.20px;font-size:10.0px;color:#222;font-weight:normal;font-family:'Liberation Sans', sans-serif;transform:scaleX(0.95);transform-origin:0 0;">5</div><div class="t" style="right:325.20px;top:327.20px;font-size:10.0px;color:#222;font-weight:normal;transform:scaleX(0.95);transform-origin:100% 0;">5</div><div class="t" style="left:425.30px;top:327.20px;font-size:10.0px;color:#222;font-weight:normal;font-family:'Liberation Sans', sans-serif;transform:scaleX(0.95);transform-origin:0 0;">Caneta</div><div class="t" style="right:111.70px;top:327.20px;font-size:10.0px;color:#222;font-weight:normal;transform:scaleX(0.95);transform-origin:100% 0;">5.75</div><div class="t" style="right:49.80px;top:327.20px;font-size:10.0px;color:#222;font-weight:normal;transform:scaleX(0.95);transform-origin:100% 0;">20</div><div class="t" style="left:321.20px;top:347.20px;font-size:10.0px;color:#222;font-weight:normal;font-family:'Liberation Sans', sans-serif;transform:scaleX(0.95);transform-origin:0 0;">6</div><div class="t" style="right:325.20px;top:347.20px;font-size:10.0px;color:#222;font-weight:normal;transform:scaleX(0.95);transform-origin:100% 0;">6</div><div class="t" style="left:425.30px;top:347.20px;font-size:10.0px;color:#222;font-weight:normal;font-family:'Liberation Sans', sans-serif;transform:scaleX(0.95);transform-origin:0 0;">Compasso</div><div class="t" style="right:111.70px;top:347.20px;font-size:10.0px;color:#222;font-weight:normal;transform:scaleX(0.95);transform-origin:100% 0;">8.15</div><div class="t" style="right:49.80px;top:347.20px;font-size:10.0px;color:#222;font-weight:normal;transform:scaleX(0.95);transform-origin:100% 0;">13</div><div class="t" style="left:321.20px;top:367.20px;font-size:10.0px;color:#222;font-weight:normal;font-family:'Liberation Sans', sans-serif;transform:scaleX(0.95);transform-origin:0 0;">7</div><div class="t" style="right:325.20px;top:367.20px;font-size:10.0px;color:#222;font-weight:normal;transform:scaleX(0.95);transform-origin:100% 0;">7</div><div class="t" style="left:425.30px;top:367.20px;font-size:10.0px;color:#222;font-weight:normal;font-family:'Liberation Sans', sans-serif;transform:scaleX(0.95);transform-origin:0 0;">Caderno Brochura</div><div class="t" style="right:111.70px;top:367.20px;font-size:10.0px;color:#222;font-weight:normal;transform:scaleX(0.95);transform-origin:100% 0;">9.33</div><div class="t" style="right:49.80px;top:367.20px;font-size:10.0px;color:#222;font-weight:normal;transform:scaleX(0.95);transform-origin:100% 0;">10</div><div class="t" style="left:321.20px;top:387.20px;font-size:10.0px;color:#222;font-weight:normal;font-family:'Liberation Sans', sans-serif;transform:scaleX(0.95);transform-origin:0 0;">8</div><div class="t" style="right:325.20px;top:387.20px;font-size:10.0px;color:#222;font-weight:normal;transform:scaleX(0.95);transform-origin:100% 0;">8</div><div class="t" style="left:425.30px;top:387.20px;font-size:10.0px;color:#222;font-weight:normal;font-family:'Liberation Sans', sans-serif;transform:scaleX(0.95);transform-origin:0 0;">Transferidor</div><div class="t" style="right:111.70px;top:387.20px;font-size:10.0px;color:#222;font-weight:normal;transform:scaleX(0.95);transform-origin:100% 0;">5.22</div><div class="t" style="right:49.80px;top:387.20px;font-size:10.0px;color:#222;font-weight:normal;transform:scaleX(0.95);transform-origin:100% 0;">10</div><svg style="left:218.50px;top:34.20px" width="13" height="12.5" viewBox="0 0 13 12.5"><ellipse cx="5.6" cy="2.3" rx="5.4" ry="2.1" fill="#1e1e1e"/><path d="M0.2 3.2 L0.2 5.2 C0.2 6.5 2.6 7.4 5.6 7.4 L7 7.3 L6 5.7 C2.8 5.8 0.2 4.6 0.2 3.2Z" fill="#1e1e1e"/><path d="M0.2 6.6 L0.2 8.6 C0.2 9.9 2.6 10.8 5.6 10.8 L5.6 9.1 C2.8 9.1 0.2 8 0.2 6.6Z" fill="#1e1e1e"/><path d="M11 3.2 L11 5.3 L9.6 5.3 Z" fill="#1e1e1e"/><path d="M7.2 5.6 L12.6 9 L7.2 12.4 Z" fill="#1e1e1e"/></svg><svg style="left:242.60px;top:33.70px" width="13" height="10.6" viewBox="0 0 13 10.6"><rect x="0.3" y="0.3" width="12.4" height="10" rx="1" fill="#1e1e1e"/><g fill="#fff"><rect x="1.6" y="2.6" width="2.7" height="1.9"/><rect x="5.15" y="2.6" width="2.7" height="1.9"/><rect x="8.7" y="2.6" width="2.7" height="1.9"/><rect x="1.6" y="5.3" width="2.7" height="1.9"/><rect x="5.15" y="5.3" width="2.7" height="1.9"/><rect x="8.7" y="5.3" width="2.7" height="1.9"/><rect x="1.6" y="8" width="2.7" height="1.3"/><rect x="5.15" y="8" width="2.7" height="1.3"/><rect x="8.7" y="8" width="2.7" height="1.3"/></g></svg><svg style="left:266.20px;top:35.90px" width="13.5" height="10" viewBox="0 0 13.5 10"><path d="M0.2 0.2 L10.2 0.2 L10.2 1.4 L6.6 4.8 L6.6 9.6 L4 9.6 L4 4.8 L0.2 1.4Z" fill="#1e1e1e"/><rect x="6.6" y="3.8" width="6.6" height="6" fill="#1e1e1e"/><g fill="#ddd"><rect x="7.8" y="5.6" width="1.7" height="3.2"/><rect x="10.3" y="5.6" width="1.7" height="3.2"/></g></svg><svg style="left:290.00px;top:33.40px" width="14" height="13" viewBox="0 0 14 13"><circle cx="5.8" cy="5.6" r="4.3" fill="none" stroke="#151515" stroke-width="2"/><path d="M8.9 8.8 L12.4 11.9" stroke="#151515" stroke-width="2.2" stroke-linecap="round"/></svg><svg style="left:320.80px;top:60.00px" width="12.5" height="9.2" viewBox="0 0 12.5 9.2"><path d="M0.6 8.5 L0.6 1.1 L4 1.1 L5.2 2.5 L10 2.5 L10 4" stroke="#4a4a4a" stroke-width="1.1" fill="none" stroke-linejoin="round"/><path d="M0.6 8.5 L2.8 4.2 L12 4.2 L9.8 8.5 Z" stroke="#4a4a4a" stroke-width="1.1" fill="none" stroke-linejoin="round"/></svg><svg style="left:346.00px;top:60.00px" width="10.2" height="9.8" viewBox="0 0 10.2 9.8"><path d="M0.6 0.6 L7.8 0.6 L9.6 2.4 L9.6 9.2 L0.6 9.2 Z" stroke="#4a4a4a" stroke-width="1.1" fill="none"/><rect x="2.6" y="1" width="4.2" height="2.4" fill="#9a9a9a" stroke="#4a4a4a" stroke-width="0.8"/><rect x="2.1" y="5.7" width="5.9" height="3.4" fill="#fff" stroke="#4a4a4a" stroke-width="0.9"/></svg><svg style="left:368.30px;top:63.00px" width="7.6" height="4.2" viewBox="0 0 7.6 4.2"><path d="M0.7 0.7 L3.8 3.5 L6.8999999999999995 0.7" stroke="#555" stroke-width="1.4" fill="none"/></svg><svg style="left:394.60px;top:60.30px" width="13.1" height="10.9" viewBox="0 0 13.1 10.9"><rect x="0" y="0" width="13.1" height="10.9" rx="1" fill="#4a4a4a"/><g fill="#e8e8e8"><rect x="1.3" y="2.2" width="3.1" height="1.9"/><rect x="8.7" y="2.2" width="3.1" height="1.9"/><rect x="1.3" y="5" width="3.1" height="1.9"/><rect x="8.7" y="5" width="3.1" height="1.9"/><rect x="1.3" y="7.8" width="3.1" height="1.9"/><rect x="8.7" y="7.8" width="3.1" height="1.9"/><rect x="5.2" y="7.8" width="2.7" height="1.9"/></g><circle cx="6.55" cy="4.5" r="1.6" fill="#e8e8e8"/><circle cx="6.55" cy="4.5" r="1" fill="#4a4a4a"/></svg><svg style="left:427.50px;top:60.30px" width="11.5" height="10.5" viewBox="0 0 11.5 10.5"><circle cx="4.6" cy="4.5" r="3.6" fill="none" stroke="#444" stroke-width="1.5"/><path d="M7.2 7.2 L10.6 10" stroke="#444" stroke-width="1.7" stroke-linecap="round"/></svg><svg style="left:451.10px;top:63.00px" width="7.3" height="4.2" viewBox="0 0 7.3 4.2"><path d="M0.7 0.7 L3.65 3.5 L6.6 0.7" stroke="#555" stroke-width="1.4" fill="none"/></svg><svg style="left:477.00px;top:59.40px" width="12" height="11.3" viewBox="0 0 12 11.3"><path d="M0.6 3 L3 0.6 L6.5 0.6 L6.5 3 M0.6 3 L0.6 8.5 L3.5 8.5 M0.6 3 L3 3 L3 0.6" stroke="#555" stroke-width="1" fill="none"/><path d="M4.2 4.2 L7 1.8 L11.2 1.8 L11.2 10.7 L4.2 10.7 Z M4.2 4.2 L7 4.2 L7 1.8" stroke="#555" stroke-width="1" fill="#f7f8fa"/></svg><svg style="left:500.80px;top:63.00px" width="7.3" height="4.4" viewBox="0 0 7.3 4.4"><path d="M0.85 0.85 L3.65 3.5500000000000003 L6.45 0.85" stroke="#1a1a1a" stroke-width="1.7" fill="none"/></svg><svg style="left:520.00px;top:59.30px" width="11.5" height="11" viewBox="0 0 11.5 11"><rect x="0" y="0.5" width="7" height="10.2" fill="#4d4d4d"/><rect x="1.2" y="0" width="4.6" height="1.5" fill="#4d4d4d"/><path d="M5 4 L8 4 L10.8 6.8 L10.8 10.8 L5 10.8 Z" fill="#fff" stroke="#555" stroke-width="0.9"/></svg><svg style="left:551.80px;top:60.30px" width="8.6" height="9.6" viewBox="0 0 8.6 9.6"><rect x="0" y="1.4" width="8.6" height="1.6" fill="#555"/><rect x="2.6" y="0" width="3.4" height="1.6" fill="#555"/><path d="M0.8 3.4 L7.8 3.4 L7.2 9.6 L1.4 9.6 Z" fill="#555"/><path d="M3 4.6 L3 8.6 M5.6 4.6 L5.6 8.6" stroke="#999" stroke-width="0.7"/></svg><svg style="left:581.00px;top:59.80px" width="10.5" height="9.4" viewBox="0 0 10.5 9.4"><path d="M6 1.2 L1 1.2 Q0.6 1.2 0.6 1.6 L0.6 8.6 Q0.6 8.9 1 8.9 L8 8.9 Q8.4 8.9 8.4 8.6 L8.4 5" stroke="#444" stroke-width="1.1" fill="none"/><path d="M3.4 6.6 L3.8 4.8 L8.2 0.4 L9.8 2 L5.4 6.4 Z" fill="#444"/></svg><svg style="left:594.80px;top:63.00px" width="7.1" height="4" viewBox="0 0 7.1 4"><path d="M0.7 0.7 L3.55 3.3 L6.3999999999999995 0.7" stroke="#555" stroke-width="1.4" fill="none"/></svg><svg style="left:625.10px;top:60.90px" width="10" height="9.2" viewBox="0 0 10 9.2"><path d="M0 0 L10 0 L10 1.2 L6.4 5 L6.4 9.2 L3.6 9.2 L3.6 5 L0 1.2 Z" fill="#fff"/></svg><svg style="left:652.00px;top:62.80px" width="8" height="4.8" viewBox="0 0 8 4.8"><path d="M0.9 0.9 L4.0 3.9 L7.1 0.9" stroke="#fff" stroke-width="1.8" fill="none"/></svg><svg style="left:384.50px;top:88.20px" width="5.8" height="3.4" viewBox="0 0 5.8 3.4"><path d="M0.65 0.65 L2.9 2.75 L5.1499999999999995 0.65" stroke="#333" stroke-width="1.3" fill="none"/></svg><div class="r" style="left:407.70px;top:84.30px;width:9.50px;height:9.70px;background:#5c5c5c"></div><div class="r" style="left:424.40px;top:79.70px;width:24.60px;height:19.00px;background:#fff"></div><svg style="left:432.00px;top:84.30px" width="8.8" height="9.7" viewBox="0 0 8.8 9.7"><path d="M0 0 L8.8 4.85 L0 9.7 Z" fill="#151515"/></svg><svg style="left:454.40px;top:86.80px" width="7.6" height="4.3" viewBox="0 0 7.6 4.3"><path d="M0.7 0.7 L3.8 3.5999999999999996 L6.8999999999999995 0.7" stroke="#555" stroke-width="1.4" fill="none"/></svg><svg style="left:480.80px;top:83.20px" width="11" height="11.5" viewBox="0 0 11 11.5"><path d="M3.2 6.4 L3.2 1.4 Q3.2 0.5 4.1 0.5 Q5 0.5 5 1.4 L5 5.2 L8.4 5.9 Q9.8 6.3 9.8 7.7 L9.6 9 Q9.2 10.9 7.3 10.9 L5 10.9 Q4 10.9 3.2 10 L0.8 7.4 Q0.4 6.7 1.1 6.3 Q1.7 6 2.3 6.5 Z" fill="#fff" stroke="#555" stroke-width="0.95" stroke-linejoin="round"/></svg><svg style="left:505.50px;top:84.30px" width="11.8" height="8.3" viewBox="0 0 11.8 8.3"><rect x="0.5" y="0.5" width="10.8" height="7.3" rx="0.6" fill="#fff" stroke="#444" stroke-width="1"/><rect x="0.5" y="0.5" width="10.8" height="2" fill="#444"/><path d="M2 4.3 L3.2 4.3 M4.3 4.3 L10 4.3 M2 6.2 L3.2 6.2 M4.3 6.2 L10 6.2" stroke="#444" stroke-width="1"/></svg><svg style="left:529.30px;top:87.00px" width="6.8" height="4.1" viewBox="0 0 6.8 4.1"><path d="M0.7 0.7 L3.4 3.3999999999999995 L6.1 0.7" stroke="#555" stroke-width="1.4" fill="none"/></svg><svg style="left:550.00px;top:80.00px" width="20" height="18" viewBox="0 0 20 18"><path d="M5.4 6.2 Q8.2 2.6 11 5.2" stroke="#333" stroke-width="1.2" fill="none"/><path d="M9.6 5.6 L12.8 7 L12.4 3.8 Z" fill="#333"/><rect x="7.4" y="9.1" width="7.4" height="5.3" rx="1.2" fill="#3a3a3a"/><ellipse cx="11.100000000000001" cy="9.200000000000001" rx="3.7" ry="1.3" fill="#3a3a3a"/><path d="M7.4 11.2 Q11.100000000000001 12.5 14.8 11.2 M7.4 13.5 Q11.100000000000001 14.8 14.8 13.5" stroke="#f4f5f7" stroke-width="0.8" fill="none"/></svg><svg style="left:575.00px;top:80.00px" width="20" height="18" viewBox="0 0 20 18"><path d="M14.6 6.2 Q11.8 2.6 9 5.2" stroke="#333" stroke-width="1.2" fill="none"/><path d="M10.4 5.6 L7.2 7 L7.6 3.8 Z" fill="#333"/><rect x="6.8" y="9.1" width="7.6" height="5.3" rx="1.2" fill="#3a3a3a"/><ellipse cx="10.6" cy="9.200000000000001" rx="3.8" ry="1.3" fill="#3a3a3a"/><path d="M6.8 11.2 Q10.6 12.5 14.399999999999999 11.2 M6.8 13.5 Q10.6 14.8 14.399999999999999 13.5" stroke="#f4f5f7" stroke-width="0.8" fill="none"/></svg><svg style="left:609.60px;top:85.20px" width="12.5" height="7.5" viewBox="0 0 12.5 7.5"><path d="M4.6 0.3 L12.2 0.3 L8.2 7 L0.6 7 Z" fill="#fff" stroke="#1a1a1a" stroke-width="0.9" stroke-linejoin="round"/><path d="M4.6 0.3 L12.2 0.3 L9.8 4.3 L2.2 4.3 Z" fill="#1a1a1a"/></svg><svg style="left:624.80px;top:87.10px" width="6.9" height="4.1" viewBox="0 0 6.9 4.1"><path d="M0.75 0.75 L3.45 3.3499999999999996 L6.15 0.75" stroke="#1a1a1a" stroke-width="1.5" fill="none"/></svg><svg style="left:652.00px;top:83.30px" width="11.2" height="9.3" viewBox="0 0 11.2 9.3"><path d="M4.6 0 L6.6 0 L6.6 3.6 L8.6 3.6 L5.6 6.6 L2.6 3.6 L4.6 3.6 Z" fill="#1a1a1a"/><rect x="0" y="6" width="11.2" height="3.3" fill="#1a1a1a"/><rect x="8.2" y="7" width="1" height="1.2" fill="#fff"/><rect x="9.6" y="7" width="1" height="1.2" fill="#fff"/></svg><svg style="left:688.20px;top:33.60px" width="8.4" height="10.4" viewBox="0 0 8.4 10.4"><path d="M6.6 1 L1.8 5.2 L6.6 9.4" stroke="#111" stroke-width="2.1" fill="none"/></svg><svg style="left:706.90px;top:33.60px" width="8.4" height="10.4" viewBox="0 0 8.4 10.4"><path d="M1.8 1 L6.6 5.2 L1.8 9.4" stroke="#111" stroke-width="2.1" fill="none"/></svg><div class="t" style="left:723.30px;top:35.20px;font-size:11px;color:#2e4d70;font-weight:normal;font-family:'Liberation Sans', sans-serif;">Bpu</div><svg style="left:727.40px;top:36.40px" width="7.4" height="7.6" viewBox="0 0 7.4 7.6"><path d="M1 1 L6.4 6.6 M6.4 1 L1 6.6" stroke="#111" stroke-width="1.9"/></svg><div class="r" style="left:723.80px;top:49.00px;width:17.20px;height:2.00px;background:#2f5f8c"></div><svg style="left:726.10px;top:108.90px" width="7.6" height="7.6" viewBox="0 0 7.6 7.6"><path d="M1 1 L6.6 6.6 M6.6 1 L1 6.6" stroke="#111" stroke-width="2.1"/></svg><svg style="left:0;top:0" width="741" height="494"><rect x="310.00" y="182.40" width="392.00" height="244.50" fill="none" stroke="#3d45be" stroke-width="3.8"/><rect x="35.70" y="50.40" width="112.60" height="21.40" fill="none" stroke="#3d45be" stroke-width="3.8"/><rect x="94.00" y="408.10" width="131.60" height="68.80" fill="none" stroke="#3d45be" stroke-width="3.8"/><path d="M229 444 L219.6 336 C218.6 300 226 283.5 252 282.6 L307 284.2" stroke="#3d45be" stroke-width="3.9" fill="none" stroke-linecap="round"/><path d="M296.6 273.5 L307.5 284.3 L296.6 292.9" stroke="#3d45be" stroke-width="3.9" fill="none" stroke-linecap="round" stroke-linejoin="round"/></svg></body></html>
